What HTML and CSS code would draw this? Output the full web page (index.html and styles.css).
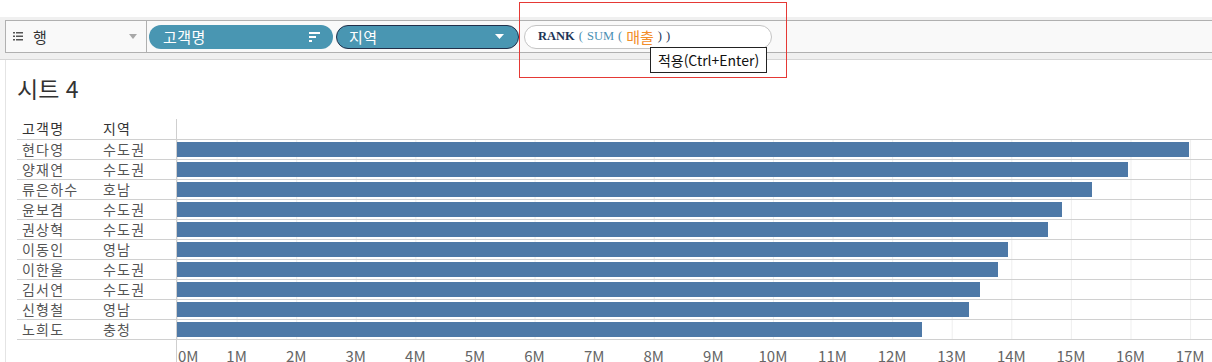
FILE: index.html
```html
<!DOCTYPE html>
<html lang="ko">
<head>
    <meta charset="UTF-8">
    <title>시트 4</title>
    <link rel="stylesheet" href="styles.css">
</head>
<body>
    <div class="top-gap"></div>
    <div class="shelf-band">
        <div class="shelf">
            <div class="shelf-label">
                <svg class="list-icon" width="10" height="9" viewBox="0 0 10 9">
                    <rect x="0" y="0" width="2" height="1.5" fill="#555"/>
                    <rect x="3" y="0" width="7" height="1.5" fill="#555"/>
                    <rect x="0" y="3.5" width="2" height="1.5" fill="#555"/>
                    <rect x="3" y="3.5" width="7" height="1.5" fill="#555"/>
                    <rect x="0" y="7" width="2" height="1.5" fill="#555"/>
                    <rect x="3" y="7" width="7" height="1.5" fill="#555"/>
                </svg>
                <span class="shelf-name">행</span>
                <svg class="caret" width="8" height="5" viewBox="0 0 8 5"><path d="M0 0H8L4 5Z" fill="#a8a8a8"/></svg>
            </div>
            <div class="pill pill-name">
                <span>고객명</span>
                <svg width="11" height="10" viewBox="0 0 11 10">
                    <rect x="0" y="0" width="11" height="2" fill="#fff"/>
                    <rect x="0" y="4" width="7" height="2" fill="#fff"/>
                    <rect x="0" y="8" width="3" height="2" fill="#fff"/>
                </svg>
            </div>
            <div class="pill pill-region">
                <span>지역</span>
                <svg width="9" height="5" viewBox="0 0 9 5"><path d="M0 0H9L4.5 5Z" fill="#fff"/></svg>
            </div>
            <div class="formula">
                <span class="fn-rank">RANK</span>
                <span class="paren">(</span>
                <span class="fn-sum">SUM</span>
                <span class="paren">(</span>
                <span class="field">매출</span>
                <span class="paren-dark">)</span>
                <span class="paren-dark">)</span>
            </div>
        </div>
    </div>

    <!-- 수식 입력 툴팁 + 강조 박스 -->
    <div class="highlight"></div>
    <div class="tooltip">적용(Ctrl+Enter)</div>

    <div class="sheet">
        <h1 class="title">시트 4</h1>
        <div class="table">
            <div class="row head">
                <div class="cell name">고객명</div>
                <div class="cell region">지역</div>
                <div class="plot"></div>
            </div>
            <div class="row">
                <div class="cell name">현다영</div>
                <div class="cell region">수도권</div>
                <div class="plot"><div class="bar" style="width: 1012px"></div></div>
            </div>
            <div class="row">
                <div class="cell name">양재연</div>
                <div class="cell region">수도권</div>
                <div class="plot"><div class="bar" style="width: 951px"></div></div>
            </div>
            <div class="row">
                <div class="cell name">류은하수</div>
                <div class="cell region">호남</div>
                <div class="plot"><div class="bar" style="width: 915px"></div></div>
            </div>
            <div class="row">
                <div class="cell name">윤보겸</div>
                <div class="cell region">수도권</div>
                <div class="plot"><div class="bar" style="width: 885px"></div></div>
            </div>
            <div class="row">
                <div class="cell name">권상혁</div>
                <div class="cell region">수도권</div>
                <div class="plot"><div class="bar" style="width: 871px"></div></div>
            </div>
            <div class="row">
                <div class="cell name">이동인</div>
                <div class="cell region">영남</div>
                <div class="plot"><div class="bar" style="width: 831px"></div></div>
            </div>
            <div class="row">
                <div class="cell name">이한울</div>
                <div class="cell region">수도권</div>
                <div class="plot"><div class="bar" style="width: 821px"></div></div>
            </div>
            <div class="row">
                <div class="cell name">김서연</div>
                <div class="cell region">수도권</div>
                <div class="plot"><div class="bar" style="width: 803px"></div></div>
            </div>
            <div class="row">
                <div class="cell name">신형철</div>
                <div class="cell region">영남</div>
                <div class="plot"><div class="bar" style="width: 792px"></div></div>
            </div>
            <div class="row">
                <div class="cell name">노희도</div>
                <div class="cell region">충청</div>
                <div class="plot"><div class="bar" style="width: 745px"></div></div>
            </div>
            <div class="row axis-row">
                <div class="cell name"></div>
                <div class="cell region"></div>
                <div class="axis">
                    <span class="first">0M</span>
                    <span>1M</span><span>2M</span><span>3M</span><span>4M</span>
                    <span>5M</span><span>6M</span><span>7M</span><span>8M</span>
                    <span>9M</span><span>10M</span><span>11M</span><span>12M</span>
                    <span>13M</span><span>14M</span><span>15M</span><span>16M</span>
                    <span>17M</span>
                </div>
            </div>
        </div>
    </div>
</body>
</html>
```

FILE: styles.css
```css
body{
    margin: 0;
    height: 362px;
    overflow: hidden;
    font-family: "Noto Sans CJK KR", "Noto Sans", sans-serif;
    color: #333;
    background: #fff;
}

.top-gap{
    height: 17px;
}

.shelf-band{
    background: #f0f0f0;
    padding: 3px 0 6px 5px;
    border-bottom: 1px solid #d6d6d6;
}

.shelf{
    height: 31px;
    display: flex;
    align-items: center;
    background: #f9f9f9;
    border-top: 1px solid #b0b0b0;
    border-bottom: 1px solid #b0b0b0;
}

.shelf-label{
    width: 142px;
    height: 31px;
    box-sizing: border-box;
    border-left: 1px solid #b0b0b0;
    border-right: 1px solid #b0b0b0;
    display: flex;
    align-items: center;
    padding-left: 7px;
}

.shelf-label .shelf-name{
    margin-left: 10px;
    font-size: 15px;
    color: #333;
}

.shelf-label .caret{
    margin-left: auto;
    margin-right: 9px;
}

.pill{
    height: 24px;
    box-sizing: border-box;
    border-radius: 12px;
    background: #4996b2;
    color: #fff;
    font-size: 15px;
    letter-spacing: 0.5px;
    display: flex;
    align-items: center;
    justify-content: space-between;
}

.pill-name{
    width: 184px;
    margin-left: 2px;
    padding: 0 13px 0 14px;
}

.pill-region{
    width: 183px;
    margin-left: 3px;
    padding: 0 14px 0 12px;
    border: 1.5px solid #22304a;
}

.formula{
    width: 248px;
    height: 24px;
    box-sizing: border-box;
    margin-left: 5px;
    border: 1px solid #c4c4c4;
    border-radius: 12px;
    background: #fff;
    display: flex;
    align-items: center;
    padding-left: 13px;
    gap: 4px;
    font-family: "Liberation Serif", serif;
    font-size: 12.5px;
}

.fn-rank{
    font-weight: bold;
    color: #1d3557;
}

.fn-sum{
    color: #4a8fb3;
}

.paren{
    color: #4a8fb3;
}

.paren-dark{
    color: #1d3557;
}

.field{
    color: #f28e2b;
    font-family: "Noto Sans CJK KR", sans-serif;
    font-size: 15px;
}

.highlight{
    position: absolute;
    left: 519px;
    top: 2px;
    width: 266px;
    height: 74px;
    border: 1px solid #e53935;
}

.tooltip{
    position: absolute;
    left: 650px;
    top: 47px;
    width: 115px;
    height: 24px;
    border: 1px solid #222;
    background: #fff;
    font-size: 14px;
    line-height: 24px;
    text-align: center;
    color: #111;
}

.sheet{
    margin-left: 5px;
    border-left: 1px solid #e4e4e4;
    padding-left: 11px;
    height: 302px;
}

.title{
    margin: 0;
    padding-top: 13px;
    height: 30px;
    line-height: 30px;
    font-size: 23px;
    font-weight: normal;
    color: #333;
}

.table{
    margin-top: 16px;
}

.row{
    display: grid;
    grid-template-columns: 81px 78px 1fr;
    height: 19px;
    border-bottom: 1px solid #d0d0d0;
}

.row.head{
    height: 20px;
}

.cell{
    font-size: 14px;
    line-height: 19px;
    letter-spacing: 1.2px;
    color: #555;
    padding-left: 5px;
    white-space: nowrap;
}

.head .cell{
    color: #333;
}

.plot{
    border-left: 1px solid #cfcfcf;
    background-image: linear-gradient(to right, #eeeeee 1px, transparent 1px);
    background-size: 59.6px 100%;
    background-position: 59.6px 0;
    padding-top: 2px;
}

.head .plot{
    background-image: none;
}

.bar{
    height: 15px;
    background: #4e79a7;
}

.axis-row{
    border-bottom: none;
    height: 23px;
}

.axis{
    border-left: 1px solid #cfcfcf;
    display: flex;
    padding-top: 7px;
}

.axis span{
    width: 59.6px;
    flex: none;
    text-align: center;
    font-size: 15px;
    line-height: 18px;
    color: #666;
}

.axis span.first{
    width: 29.8px;
    text-align: left;
    padding-left: 1px;
    box-sizing: border-box;
}
```
